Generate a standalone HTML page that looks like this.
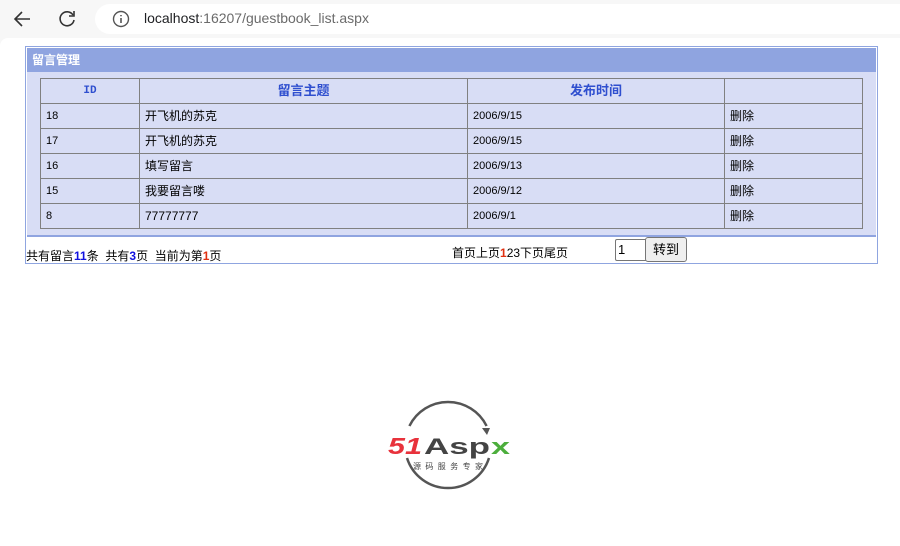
<!DOCTYPE html>
<html><head><meta charset="utf-8"><style>
body{margin:0;width:900px;height:546px;background:#f7f7f7;font-family:"Liberation Sans","Noto Sans CJK SC",sans-serif;position:relative;overflow:hidden}
.top{position:absolute;left:0;top:0;width:900px;height:38px;background:#f7f7f7}
.addr{position:absolute;left:95px;top:4px;width:820px;height:30px;border-radius:15px;background:#fff}
.url{position:absolute;left:144px;top:10px;font-size:14px;color:#202124}
.url span{color:#6b6b6b}
.page{position:absolute;left:0;top:38px;width:900px;height:508px;background:#fff;border-top-left-radius:8px}
.box{position:absolute;left:25px;top:46px;width:851px;height:216px;border:1px solid #8fa5e0;background:#fff}
.hd{position:absolute;left:1px;top:1px;right:1px;height:24px;background:#8fa4e0;color:#fff;font-weight:bold;font-size:12px;line-height:25px;padding-left:5px}
.inner{position:absolute;left:1px;top:25px;width:849px;height:163px;background:#d8ddf5;border-bottom:2px solid #8fa4e0}
table{position:absolute;left:13px;top:6px;border-collapse:collapse;font-size:12px;table-layout:fixed;width:822px}
td{border:1px solid #808080;height:24px;padding:0 0 0 5px;background:#d8ddf5;line-height:24px}
th{border:1px solid #808080;height:24px;color:#2f4fcf;font-size:13px;font-weight:bold;line-height:24px;padding:0}
.foot{position:absolute;font-size:12px;color:#000}
.b{color:#1010e0;font-weight:bold}.r{color:#e03010;font-weight:bold}
</style></head><body>
<div class="top"></div>
<div class="addr"></div>
<svg style="position:absolute;left:12px;top:9px" width="22" height="20"><path d="M18 10H4M10 3L3 10l7 7" stroke="#333" stroke-width="1.6" fill="none"/></svg>
<svg style="position:absolute;left:56px;top:8px" width="22" height="22"><path d="M17 7A7 7 0 1 0 18 12" stroke="#333" stroke-width="1.6" fill="none"/><path d="M18 3v5h-5" stroke="#333" stroke-width="1.6" fill="none"/></svg>
<svg style="position:absolute;left:112px;top:10px" width="18" height="18"><circle cx="9" cy="9" r="7.5" stroke="#555" stroke-width="1.4" fill="none"/><path d="M9 8v5M9 5v1.3" stroke="#555" stroke-width="1.6"/></svg>
<div class="url">localhost<span>:16207/guestbook_list.aspx</span></div>
<div class="page"></div>
<div class="box">
<div class="hd">留言管理</div>
<div class="inner">
<table>
<colgroup><col style="width:99px"><col style="width:328px"><col style="width:257px"><col style="width:138px"></colgroup>
<tr><th style="font-family:'Liberation Mono',monospace;font-size:11px">ID</th><th>留言主题</th><th>发布时间</th><th></th></tr>
<tr><td style="font-size:11px">18</td><td>开飞机的苏克</td><td style="font-size:11px">2006/9/15</td><td>删除</td></tr>
<tr><td style="font-size:11px">17</td><td>开飞机的苏克</td><td style="font-size:11px">2006/9/15</td><td>删除</td></tr>
<tr><td style="font-size:11px">16</td><td>填写留言</td><td style="font-size:11px">2006/9/13</td><td>删除</td></tr>
<tr><td style="font-size:11px">15</td><td>我要留言喽</td><td style="font-size:11px">2006/9/12</td><td>删除</td></tr>
<tr><td style="font-size:11px">8</td><td>77777777</td><td style="font-size:11px">2006/9/1</td><td>删除</td></tr>
</table>
</div>
<div class="foot" style="left:0;top:200px">共有留言<span class="b">11</span>条&nbsp; 共有<span class="b">3</span>页&nbsp; 当前为第<span class="r">1</span>页</div>
<div class="foot" style="left:426px;top:197px">首页上页<span class="r">1</span>23下页尾页</div>
<div style="position:absolute;left:589px;top:192px;width:28px;height:20px;border:1px solid #767676;border-radius:2px;font-size:13px;line-height:20px;padding-left:2px">1</div>
<div style="position:absolute;left:619px;top:190px;width:40px;height:23px;border:1px solid #767676;border-radius:3px;background:#efefef;font-size:13px;text-align:center;line-height:23px">转到</div>
</div>
<svg style="position:absolute;left:385px;top:398px" width="130" height="98">
<path d="M24.4 28A43 43 0 0 1 101.6 28" stroke="#555" stroke-width="2.5" fill="none"/>
<path d="M97 30l8 0-3 7z" fill="#555"/>
<path d="M104 60A43 43 0 0 1 22 60" stroke="#555" stroke-width="2.5" fill="none"/>
<text x="3" y="56" font-family="Liberation Sans,sans-serif" font-size="23" font-weight="bold" font-style="italic" fill="#e8323c" textLength="34" lengthAdjust="spacingAndGlyphs">51</text>
<text x="39" y="56" font-family="Liberation Sans,sans-serif" font-size="22" font-weight="bold" fill="#444" textLength="66" lengthAdjust="spacingAndGlyphs">Asp</text>
<text x="106" y="56" font-family="Liberation Sans,sans-serif" font-size="22" font-weight="bold" fill="#4cae3c" textLength="19" lengthAdjust="spacingAndGlyphs">x</text>
<text x="28" y="71" font-family="Noto Sans CJK SC,sans-serif" font-size="8" fill="#444" textLength="70" lengthAdjust="spacing">源码服务专家</text>
</svg>
</body></html>
